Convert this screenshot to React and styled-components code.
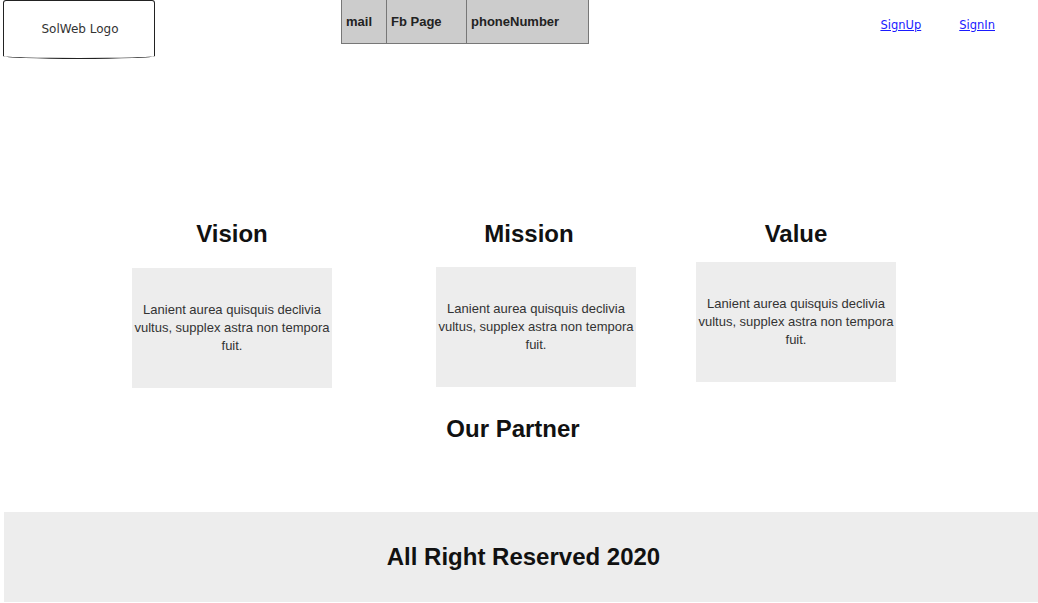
import React from "react";
import styled, { createGlobalStyle } from "styled-components";

const Global = createGlobalStyle`
  html, body { margin: 0; padding: 0; background: #fff; }
  body { font-family: "Liberation Sans", Arial, sans-serif; }
`;

const Page = styled.div`
  width: 1038px;
  height: 603px;
  overflow: hidden;
  display: flex;
  flex-direction: column;
`;

const Header = styled.header`
  display: flex;
  align-items: flex-start;
  height: 59px;
`;

const Logo = styled.div`
  margin-left: 3px;
  width: 152px;
  height: 59px;
  border: 1px solid #222;
  border-radius: 3px 3px 50% 50% / 3px 3px 3px 3px;
  display: flex;
  align-items: center;
  justify-content: center;
  font-family: "DejaVu Sans", sans-serif;
  font-size: 12px;
  color: #333;
  padding: 0 0 1px 2px;
  box-sizing: border-box;
`;

const Nav = styled.nav`
  margin-left: 186px;
  display: flex;
  height: 44px;
  background: #ccc;
  border-left: 1px solid #777;
  border-bottom: 1px solid #777;
  box-sizing: border-box;
`;

const NavCell = styled.div`
  width: ${(p) => p.w}px;
  box-sizing: border-box;
  border-right: 1px solid #777;
  display: flex;
  align-items: center;
  padding: 0 0 0 4px;
  font-size: 13px;
  font-weight: bold;
  color: #222;
`;

const Links = styled.div`
  margin-left: auto;
  margin-right: 43px;
  margin-top: 18px;
  display: flex;
  gap: 38px;
`;

const Link = styled.a`
  font-family: "DejaVu Sans", sans-serif;
  font-size: 11.5px;
  color: #1a1aff;
  text-decoration: underline;
`;

const Values = styled.section`
  display: flex;
  padding-left: 132px;
  margin-top: 161px;
`;

const Column = styled.div`
  width: 200px;
  margin-left: ${(p) => p.ml || 0}px;
  display: flex;
  flex-direction: column;
  align-items: center;
`;

const Heading = styled.h2`
  margin: 0;
  font-size: 24px;
  line-height: 28px;
  font-weight: bold;
  color: #111;
  transform: translateX(${(p) => p.dx || 0}px);
`;

const Card = styled.div`
  margin-top: ${(p) => p.mt}px;
  width: 200px;
  height: 120px;
  background: #ededed;
  display: flex;
  align-items: center;
  justify-content: center;
  text-align: center;
  font-size: 13px;
  line-height: 18px;
  color: #333;
  box-sizing: border-box;
  padding: 0;
`;

const Partner = styled.h2`
  margin: 27px 0 0;
  text-align: center;
  padding-right: 12px;
  font-size: 24px;
  line-height: 28px;
  font-weight: bold;
  color: #111;
`;

const Footer = styled.footer`
  margin-top: 69px;
  margin-left: 4px;
  height: 90px;
  background: #ededed;
  display: flex;
  align-items: center;
  justify-content: center;
  padding-left: 5px;
  font-size: 24px;
  font-weight: bold;
  color: #111;
`;

const text = "Lanient aurea quisquis declivia vultus, supplex astra non tempora fuit.";

export default function App() {
  return (
    <Page>
      <Global />
      <Header>
        <Logo>SolWeb Logo</Logo>
        <Nav>
          <NavCell w={45}>mail</NavCell>
          <NavCell w={80}>Fb Page</NavCell>
          <NavCell w={122}>phoneNumber</NavCell>
        </Nav>
        <Links>
          <Link href="#">SignUp</Link>
          <Link href="#">SignIn</Link>
        </Links>
      </Header>
      <Values>
        <Column>
          <Heading>Vision</Heading>
          <Card mt={20}>{text}</Card>
        </Column>
        <Column ml={104}>
          <Heading dx={-7}>Mission</Heading>
          <Card mt={19}>{text}</Card>
        </Column>
        <Column ml={60}>
          <Heading>Value</Heading>
          <Card mt={14}>{text}</Card>
        </Column>
      </Values>
      <Partner>Our Partner</Partner>
      <Footer>All Right Reserved 2020</Footer>
    </Page>
  );
}
